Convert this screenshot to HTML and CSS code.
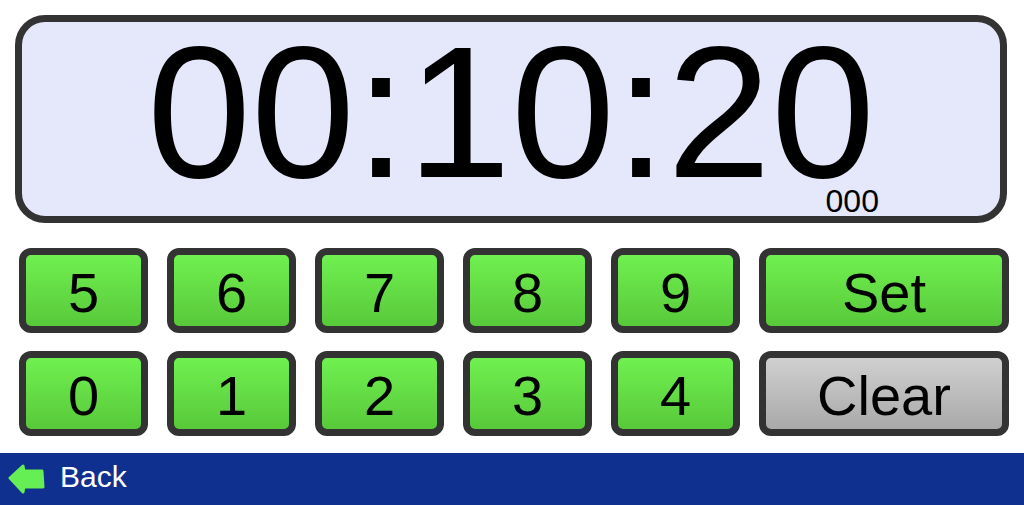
FILE: index.html
```html
<!DOCTYPE html>
<html>
<head>
<meta charset="utf-8">
<link rel="stylesheet" href="styles.css">
</head>
<body>
<div class="page">
  <div class="display">
    <div class="time">00:10:20<span class="ms">000</span></div>
  </div>
  <div class="keypad">
    <div class="key">5</div>
    <div class="key">6</div>
    <div class="key">7</div>
    <div class="key">8</div>
    <div class="key">9</div>
    <div class="key">Set</div>
    <div class="key">0</div>
    <div class="key">1</div>
    <div class="key">2</div>
    <div class="key">3</div>
    <div class="key">4</div>
    <div class="key key-gray">Clear</div>
  </div>
</div>
<div class="bar">
  <svg class="arrow" width="40" height="30" viewBox="0 0 40 30">
    <path d="M2 14 L15 2 L16 7 L34 7 L35 23 L16 23 L15 28 Z" fill="#66ee55" stroke="#66ee55" stroke-width="3" stroke-linejoin="round"/>
  </svg>
  <span class="back">Back</span>
</div>
</body>
</html>
```
FILE: styles.css
```css
html, body {
  margin: 0;
  padding: 0;
  background: #ffffff;
  font-family: "Liberation Sans", Arial, sans-serif;
  color: #000;
}
.page {
  height: 453px;
  box-sizing: border-box;
  padding: 15px 0 0 15px;
}
.display {
  width: 992px;
  height: 208px;
  box-sizing: border-box;
  border: 7px solid #333333;
  border-radius: 30px;
  background: #e5e7fb;
  display: flex;
  justify-content: center;
  align-items: flex-start;
}
.time {
  position: relative;
  font-size: 187px;
  line-height: 181px;
}
.ms {
  position: absolute;
  right: -4px;
  top: 163px;
  font-size: 32px;
  line-height: 32px;
}
.keypad {
  margin: 25px 0 0 4px;
  display: grid;
  grid-template-columns: repeat(5, 129px) 250px;
  grid-auto-rows: 85px;
  column-gap: 19px;
  row-gap: 18px;
}
.key {
  box-sizing: border-box;
  border: 7px solid #333333;
  border-radius: 12px;
  background: linear-gradient(#70f050, #58c93a);
  display: flex;
  align-items: center;
  justify-content: center;
  font-size: 56px;
  padding-top: 3px;
}
.key-gray {
  background: linear-gradient(#d0d0d0, #a9a9a9);
}
.bar {
  height: 52px;
  background: #10308f;
  display: flex;
  align-items: center;
  padding-left: 8px;
  gap: 12px;
}
.arrow {
  display: block;
}
.back {
  color: #ffffff;
  font-size: 30px;
  margin-top: -4px;
}
```
